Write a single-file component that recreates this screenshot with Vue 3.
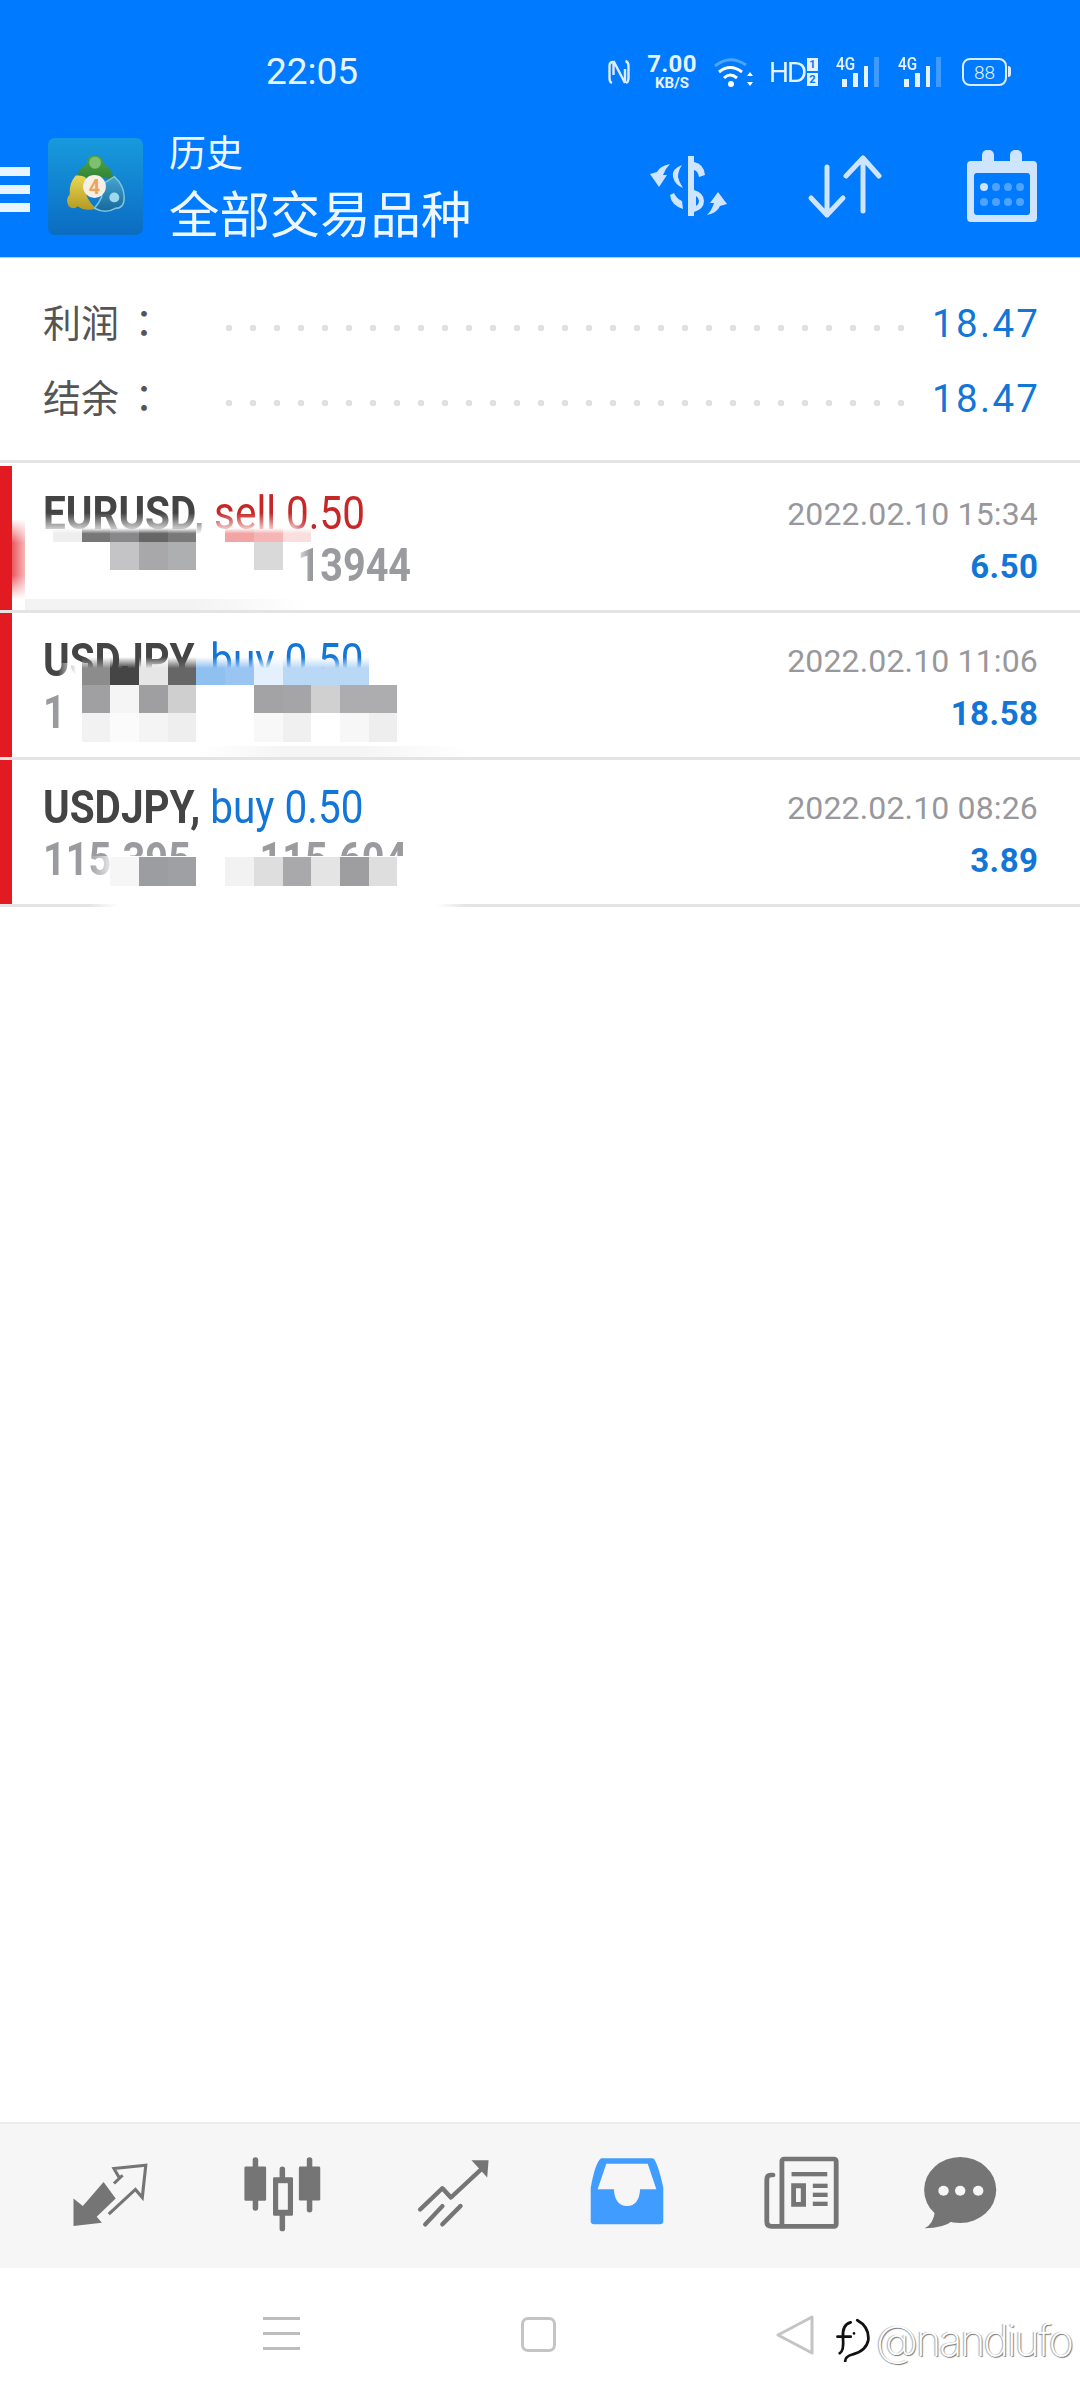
<script setup>
// one row per trade, mosaics are the blurred-out parts of the screenshot
const trades = [
  {
    symbol: 'EURUSD,', side: 'sell', lots: '0.50', price: '', priceEnd: '13944',
    time: '2022.02.10 15:34', profit: '6.50', kind: 'first',
    mosaic: {
      rows: '14px 28px', fade: true,
      cells: [
        ['#eeeeee', '#777778', '#88888a', '#666667', '#79797a', null, '#f2a3a3', '#f5b5b5', '#fbdede', null, null, null],
        [null, null, '#c4c4c6', '#a8a8ab', '#aeafb1', null, null, '#d9d9da', null, null, null, null],
      ],
    },
  },
  {
    symbol: 'USDJPY,', side: 'buy', lots: '0.50', price: '1', priceEnd: '',
    time: '2022.02.10 11:06', profit: '18.58', kind: 'second',
    mosaic: {
      rows: '28px 28px 29px', fade: true,
      cells: [
        [null, '#8c8c8c', '#454545', '#e6e6e6', '#666667', '#8fc0f0', '#9ac5f2', '#e4f0fb', '#b8d8f6', '#b8d8f6', '#b8d8f6', null],
        [null, '#a0a0a2', '#f5f5f5', '#9f9fa1', '#cfcfcf', '#ffffff', '#ffffff', '#a3a3a5', '#a5a5a7', '#d0d0d0', '#adadaf', '#adadaf'],
        [null, '#f2f2f2', '#fbfbfb', '#f4f4f4', '#eeeeee', '#ffffff', '#ffffff', '#f8f8f8', '#f0f0f0', '#ffffff', '#f7f7f7', '#eeeeee'],
      ],
    },
  },
  {
    symbol: 'USDJPY,', side: 'buy', lots: '0.50', price: '115.395', priceEnd: '115.604',
    time: '2022.02.10 08:26', profit: '3.89', kind: 'third',
    mosaic: {
      rows: '29px', fade: false,
      cells: [
        [null, null, '#f6f6f6', '#9c9da0', '#9fa0a3', null, '#f2f2f2', '#dedede', '#a9a9ab', '#e4e4e4', '#9e9ea0', '#dedede'],
      ],
    },
  },
]
</script>

<template>
  <div class="page">
    <header class="header">
      <div class="status">
        <span class="clock">22:05</span>
        <div class="status-icons">
          <svg class="ic-nfc" viewBox="0 0 22 28" width="22" height="28" fill="none" stroke="#dcecff" stroke-width="2.4">
            <path d="M5 4 Q1.5 4 1.5 8 V20 Q1.5 24 4 25" />
            <path d="M5.500 3 V17 M5.500 3 L17 25 M17 11 V25" />
            <path d="M17.500 3 Q20.500 4 20.500 8 V20 Q20.500 24 18 25" />
          </svg>
          <div class="speed"><b>7.00</b><i>KB/S</i></div>
          <svg class="ic-wifi" viewBox="0 0 40 30" width="40" height="30" fill="none" stroke="#fff" stroke-width="3">
            <path d="M1 9 Q16 -3 32 8" stroke="#4ea3ff" />
            <path d="M5 15 Q16 6 28 15" />
            <path d="M10 21 Q16 15 23 21" />
            <circle cx="17" cy="27" r="3" fill="#fff" stroke="none" />
            <path d="M36 15 l-3 4 h6 z M36 29 l-3 -4 h6 z" fill="#fff" stroke="none" />
          </svg>
          <span class="hd">HD</span>
          <div class="sims"><span>1</span><span>2</span></div>
          <div class="signal">
            <span class="g4">4G</span>
            <i style="height:8px"></i><i style="height:14px"></i><i style="height:21px"></i><i class="off" style="height:30px"></i>
          </div>
          <div class="signal">
            <span class="g4">4G</span>
            <i style="height:8px"></i><i style="height:14px"></i><i style="height:21px"></i><i class="off" style="height:30px"></i>
          </div>
          <div class="battery"><span>88</span></div>
        </div>
      </div>

      <div class="toolbar">
        <div class="burger"><i></i><i></i><i></i></div>
        <svg class="logo" viewBox="8 8 96 98" width="97" height="97">
          <defs>
            <linearGradient id="logo-bg" x1="0" y1="0" x2="0" y2="1">
              <stop offset="0" stop-color="#189ade" />
              <stop offset="1" stop-color="#0b6cc2" />
            </linearGradient>
            <linearGradient id="logo-g" x1="0" y1="0" x2="0" y2="1">
              <stop offset="0" stop-color="#4fa63d" />
              <stop offset="1" stop-color="#2f7f3a" />
            </linearGradient>
            <linearGradient id="logo-y" x1="0" y1="0" x2="0" y2="1">
              <stop offset="0" stop-color="#ead755" />
              <stop offset="1" stop-color="#b49a22" />
            </linearGradient>
            <linearGradient id="logo-b" x1="0" y1="0" x2="0" y2="1">
              <stop offset="0" stop-color="#45a6d2" />
              <stop offset="1" stop-color="#17689c" />
            </linearGradient>
          </defs>
          <rect x="8" y="8" width="96" height="98" rx="7" fill="url(#logo-bg)" />
          <path d="M55 26 Q63 26 64 34 Q73 38 75 52 Q64 46 55 48 Q46 46 36 52 Q38 38 47 34 Q47 26 55 26Z" fill="url(#logo-g)" />
          <circle cx="55.500" cy="33" r="6" fill="#7fbf70" />
          <path d="M36 46 Q47 45 48 52 L47 66 Q50 74 57 79 Q46 83 38 77 Q34 81 29 77 Q25 70 30 65 Q29 54 36 46Z" fill="url(#logo-y)" />
          <path d="M75 47 Q85 56 85 68 Q85 79 76 79 Q66 85 55 79 Q60 73 62 68 L64 54Z" fill="url(#logo-b)" stroke="#7cc4e0" stroke-width="1.500" />
          <circle cx="75" cy="68" r="5" fill="#9fd8ea" />
          <circle cx="55" cy="57" r="11.500" fill="#f6efe6" />
          <text x="55" y="64.500" text-anchor="middle" class="logo-four">4</text>
        </svg>
        <div class="titles">
          <div class="t-small">历史</div>
          <div class="t-big">全部交易品种</div>
        </div>
        <div class="tools">
          <svg viewBox="10 13 80 64" width="80" height="64" fill="#cfe5ff">
            <path d="M50 15 H56 V75 H50Z" />
            <path d="M56 21 Q66 23 67 34 L61 36 Q60 30 56 29Z" />
            <path fill-rule="evenodd" d="M56 49 Q66 52 66 60 Q66 68 56 71Z M58 55 V65 Q61 63 61 60 Q61 57 58 55Z" />
            <path d="M44 24 Q33 28 35 36 Q37 44 45 47 Q41 41 40 36 Q40 30 44 24Z" />
            <path d="M32 54 Q33 64 45 68 L44 60 Q38 57 36 52Z" />
            <path d="M32 23 Q22 25 19 31 L12 33 L21 46 L29 34 L25 34 Q27 28 32 23Z" />
            <path d="M69 74 Q79 72 82 65 L89 63 L80 51 L72 62 L76 62 Q74 69 69 74Z" />
          </svg>
          <svg class="tool-sort" viewBox="0 0 76 64" width="76" height="64" fill="none" stroke="#cfe5ff" stroke-width="5" stroke-linecap="round" stroke-linejoin="round">
            <path d="M20 12 V60 M4 43 L20 60 L36 43" />
            <path d="M56 3 V56 M39 21 L56 3 L72 21" />
          </svg>
          <svg class="tool-cal" viewBox="0 0 70 72" width="70" height="72">
            <rect x="0" y="11" width="70" height="61" rx="4" fill="#cfe5ff" />
            <rect x="15" y="0" width="12" height="16" rx="5" fill="#cfe5ff" />
            <rect x="43" y="0" width="12" height="16" rx="5" fill="#cfe5ff" />
            <rect x="7" y="23" width="56" height="42" rx="3" fill="#007aff" />
            <g fill="#4ea3ff">
              <circle cx="17" cy="37" r="4" fill="#cfe5ff" /><circle cx="29" cy="37" r="4" /><circle cx="41" cy="37" r="4" /><circle cx="53" cy="37" r="4" />
              <circle cx="17" cy="52" r="4" /><circle cx="29" cy="52" r="4" /><circle cx="41" cy="52" r="4" /><circle cx="53" cy="52" r="4" />
            </g>
          </svg>
        </div>
      </div>
    </header>

    <section class="summary">
      <div class="sum-row">
        <span class="sum-label">利润<span class="colon">：</span></span>
        <span class="dots"></span>
        <span class="sum-value">18.47</span>
      </div>
      <div class="sum-row">
        <span class="sum-label">结余<span class="colon">：</span></span>
        <span class="dots"></span>
        <span class="sum-value">18.47</span>
      </div>
    </section>

    <main class="list">
      <div v-for="t in trades" :key="t.time" class="row" :class="t.kind">
        <div class="flag"></div>
        <div class="row-body">
          <div class="row-left">
            <div class="title"><b>{{ t.symbol }}</b> <span :class="t.side">{{ t.side }} {{ t.lots }}</span></div>
            <div class="price"><span>{{ t.price }}</span><span class="price-end">{{ t.priceEnd }}</span></div>
          </div>
          <div class="row-right">
            <div class="time">{{ t.time }}</div>
            <div class="profit">{{ t.profit }}</div>
          </div>
        </div>
        <div class="wash"></div>
        <div class="smear"></div>
        <div class="shade"></div>
        <div class="mosaic" :style="{ gridTemplateRows: t.mosaic.rows }">
          <template v-for="(line, i) in t.mosaic.cells" :key="i">
            <i
              v-for="(c, j) in line"
              :key="j"
              :class="{ fade: t.mosaic.fade && i === 0 }"
              :style="{ background: c || 'transparent' }"
            ></i>
          </template>
        </div>
      </div>
    </main>

    <nav class="tabs">
      <svg viewBox="200 170 240 220" width="83" height="73" preserveAspectRatio="none">
        <path d="M213 295 V378 L295 368 L280 350 L335 295 L300 245 L240 318Z" fill="#757575" />
        <path d="M345 232 L330 205 L422 195 L412 292 L392 268 L315 342 M330 250 L355 225" fill="none" stroke="#757575" stroke-width="9" />
      </svg>
      <svg viewBox="700 165 235 235" width="81" height="78" preserveAspectRatio="none">
        <g stroke="#757575" stroke-width="16" stroke-linecap="round">
          <path d="M739 180 V325 M817 208 V387 M896 180 V330" />
        </g>
        <rect x="707" y="200" width="63" height="103" rx="4" fill="#757575" />
        <rect x="865" y="200" width="62" height="102" rx="4" fill="#757575" />
        <rect x="790" y="232" width="58" height="116" rx="4" fill="#757575" />
        <rect x="805" y="250" width="28" height="80" fill="#f6f6f6" />
      </svg>
      <svg viewBox="1205 170 225 220" width="77" height="73" preserveAspectRatio="none">
        <g fill="none" stroke="#757575" stroke-width="13" stroke-linecap="round" stroke-linejoin="round">
          <path d="M1220 328 L1285 264 L1310 292 L1408 198" />
          <path d="M1235 373 L1285 318 M1285 373 L1338 318" />
        </g>
        <path d="M1370 180 H1420 L1416 232 Z" fill="#757575" />
      </svg>
      <svg viewBox="140 175 220 210" width="76" height="70" preserveAspectRatio="none">
        <path d="M175 182 H325 Q338 190 355 270 V370 Q355 380 345 380 H155 Q145 380 145 370 V270 Q158 195 175 182Z" fill="#409cff" />
        <path d="M190 198 H310 L335 275 H288 Q285 325 250 325 Q215 325 212 275 H165Z" fill="#f6f6f6" />
      </svg>
      <svg viewBox="640 165 230 228" width="79" height="76" preserveAspectRatio="none">
        <g fill="none" stroke="#757575" stroke-width="14" stroke-linejoin="round" stroke-linecap="round">
          <rect x="698" y="177" width="158" height="202" rx="6" />
          <path d="M672 225 H665 Q654 225 654 240 V365 Q654 379 668 379 H698" />
        </g>
        <g fill="#757575">
          <rect x="726" y="216" width="104" height="13" />
          <path fill-rule="evenodd" d="M725 250 H768 V320 H725Z M739 265 V306 H753 V265Z" />
          <rect x="788" y="251" width="43" height="13" />
          <rect x="788" y="278" width="43" height="13" />
          <rect x="788" y="305" width="43" height="13" />
        </g>
      </svg>
      <svg viewBox="1100 165 225 225" width="78" height="75" preserveAspectRatio="none">
        <ellipse cx="1213" cy="270" rx="104" ry="99" fill="#757575" />
        <path d="M1140 335 Q1136 372 1110 385 Q1165 385 1195 360Z" fill="#757575" />
        <circle cx="1165" cy="272" r="15" fill="#f6f6f6" />
        <circle cx="1213" cy="272" r="15" fill="#f6f6f6" />
        <circle cx="1265" cy="272" r="15" fill="#f6f6f6" />
      </svg>
    </nav>

    <footer class="nav">
      <div class="nav-menu"><i></i><i></i><i></i></div>
      <div class="nav-home"></div>
      <svg class="nav-back" viewBox="0 0 38 42" width="38" height="42" fill="none" stroke="#c4c4c4" stroke-width="3" stroke-linejoin="round">
        <path d="M36 2 V38 L2 20Z" />
      </svg>
      <div class="mark">
        <svg viewBox="0 0 34 40" width="38" height="44" fill="none" stroke="#111" stroke-width="2.500" stroke-linecap="round">
          <path d="M2 17 H14 M14 4 Q6 6 7 18 Q8 30 4 32" />
          <path d="M20 2 Q31 8 30 20 Q28 30 16 33 Q9 35 9 39" />
          <circle cx="17" cy="14" r="1.200" fill="#111" stroke="none" />
        </svg>
        <span>@nandiufo</span>
      </div>
    </footer>
  </div>
</template>

<style>
html, body { margin: 0; background: #fff; }
</style>

<style scoped>
.page {
  position: relative;
  width: 1080px;
  height: 2400px;
  display: flex;
  flex-direction: column;
  background: #fff;
  font-family: Roboto, "Noto Sans CJK SC", sans-serif;
  overflow: hidden;
}

/* header */
.header {
  height: 258px;
  background: #007aff;
  border-bottom: 1px solid #9fd4ff;
  box-sizing: border-box;
  color: #e6f2ff;
}
.status {
  height: 138px;
  box-sizing: border-box;
  display: flex;
  align-items: flex-start;
  padding: 56px 73px 0 266px;
}
.clock {
  font-size: 37px;
  line-height: 32px;
  color: #e6f4ff;
}
.status-icons {
  margin-left: auto;
  display: flex;
  align-items: center;
  height: 32px;
  color: #e6f2ff;
}
.speed {
  width: 50px;
  margin-left: 17px;
  display: flex;
  flex-direction: column;
  align-items: center;
  gap: 5px;
}
.speed b { font-size: 24px; font-weight: 700; line-height: 17px; letter-spacing: .3px; }
.speed i { font-size: 15px; font-style: normal; font-weight: 700; line-height: 11px; }
.ic-wifi { margin-left: 17px; }
.hd {
  margin-left: 15px;
  font-size: 30px;
  font-family: "Liberation Sans", sans-serif;
  letter-spacing: -2px;
  width: 37px;
  transform: scaleX(.92);
  transform-origin: left;
}
.sims {
  margin-left: 1px;
  width: 11px;
  display: flex;
  flex-direction: column;
  gap: 2px;
}
.sims span {
  background: #e6f2ff;
  color: #007aff;
  font-size: 11px;
  font-weight: 700;
  line-height: 13px;
  text-align: center;
}
.signal {
  position: relative;
  display: flex;
  align-items: flex-end;
  height: 30px;
  width: 43px;
  gap: 6px;
  margin-left: 18px;
  padding-left: 6px;
  box-sizing: border-box;
}
.signal + .signal { margin-left: 19px; }
.signal i { width: 5px; background: #e6f2ff; }
.signal i.off { background: #3f9bff; }
.g4 {
  position: absolute;
  left: 0;
  top: -1px;
  font-size: 18px;
  line-height: 16px;
  font-weight: 500;
  transform: scaleX(.85);
  transform-origin: left;
}
.battery {
  position: relative;
  margin-left: 21px;
  width: 45px;
  height: 28px;
  box-sizing: border-box;
  border: 2.5px solid #dcecff;
  border-radius: 8px;
  display: flex;
  align-items: center;
  justify-content: center;
  font-size: 19px;
  font-weight: 300;
}
.battery::after {
  content: "";
  position: absolute;
  right: -6px;
  top: 6px;
  width: 3px;
  height: 11px;
  background: #dcecff;
  border-radius: 0 3px 3px 0;
}

.toolbar {
  display: flex;
  align-items: flex-start;
  height: 119px;
}
.burger {
  width: 30px;
  margin-top: 29px;
  display: flex;
  flex-direction: column;
  gap: 9px;
}
.burger i { height: 9px; background: #e8f5ff; }
.logo { margin-left: 17px; }
.logo-four { font: 700 20px Roboto, sans-serif; fill: #eda45a; }
.titles { margin-left: 25px; color: #eef7ff; }
.t-small { font-size: 37px; line-height: 37px; margin-top: -2px; }
.t-big { font-size: 50.4px; line-height: 52px; margin-top: 17px; }
.tools { margin-left: auto; display: flex; align-items: flex-start; padding-right: 43px; }
.tools > svg { margin-top: 16px; }
.tools > .tool-sort { margin-left: 79px; margin-top: 17px; }
.tools > .tool-cal { margin-left: 84px; margin-top: 12px; }

/* summary */
.summary {
  height: 205px;
  box-sizing: border-box;
  padding-top: 26px;
  border-bottom: 3px solid #e4e4e4;
}
.sum-row {
  display: flex;
  align-items: center;
  height: 75px;
  padding: 0 42px 0 43px;
}
.sum-label {
  font-size: 38px;
  line-height: 72px;
  height: 73px;
  color: #555;
  width: 174px;
}
.colon { font-family: "Noto Sans CJK TC", sans-serif; margin-left: 6px; }
.dots {
  flex: 1;
  height: 100%;
  background-image: radial-gradient(circle, #e0e0e0 3px, transparent 3.6px);
  background-size: 24px 24px;
  background-repeat: repeat-x;
  background-position: 0 32px;
  margin-right: 18px;
}
.sum-value {
  font-size: 38.5px;
  line-height: 79px;
  height: 75px;
  color: #1275d8;
  letter-spacing: 2.3px;
  margin-right: -2.3px;
}

/* trades */
.list { flex: 1; }
.row {
  position: relative;
  display: flex;
  height: 147px;
  box-sizing: border-box;
  border-bottom: 3px solid #e4e4e4;
}
.row.first { height: 150px; padding-top: 3px; }
.flag { width: 12px; background: #e21b22; }
.row-body {
  flex: 1;
  display: flex;
  justify-content: space-between;
  padding: 21px 42px 0 31px;
}
.title, .price {
  line-height: 52px;
  white-space: nowrap;
  transform-origin: left;
}
.title { font-size: 46px; transform: scaleX(.88); }
.title b { color: #444; font-weight: 700; }
.sell { color: #c62828; }
.buy { color: #1275d8; }
.price { font-size: 46px; font-weight: 700; color: #9a9b9f; height: 52px; transform: scaleX(.86); }
.first .price-end { margin-left: 296px; }
.third .price-end { margin-left: 80px; }
.row-right { text-align: right; padding-top: 1px; }
.time { font-size: 32px; line-height: 52px; color: #98989c; letter-spacing: .15px; }
.profit { font-size: 33px; line-height: 54px; font-weight: 700; color: #1275d8; letter-spacing: .5px; margin-right: -.5px; }

/* redacted patches drawn over the row */
.mosaic {
  position: absolute;
  left: 53px;
  display: grid;
  grid-template-columns: repeat(12, 28.7px);
}
.mosaic i { display: block; }
.mosaic i.fade { -webkit-mask-image: linear-gradient(to bottom, transparent, #000 40%); mask-image: linear-gradient(to bottom, transparent, #000 40%); }
.first .mosaic { top: 65px; }
.second .mosaic { top: 44px; }
.third .mosaic { top: 97px; }

.wash, .smear, .shade { position: absolute; display: none; }
.first .wash {
  display: block;
  left: 25px;
  top: 50px;
  width: 285px;
  height: 86px;
  background: linear-gradient(to right, #fff 94%, rgba(255, 255, 255, 0));
  -webkit-mask-image: linear-gradient(to bottom, transparent, #000 25%);
  mask-image: linear-gradient(to bottom, transparent, #000 25%);
}
.second .wash {
  display: block;
  left: 58px;
  top: 50px;
  width: 30px;
  height: 90px;
  background: linear-gradient(to right, rgba(255, 255, 255, 0), #fff 60%);
}
.first .smear {
  display: block;
  left: 12px;
  top: 56px;
  width: 13px;
  height: 80px;
  background: linear-gradient(to right, #e8585d, #f6b6b8);
  -webkit-mask-image: linear-gradient(to bottom, transparent, #000 30%, #000 70%, transparent);
  mask-image: linear-gradient(to bottom, transparent, #000 30%, #000 70%, transparent);
}
.first .shade {
  display: block;
  left: 25px;
  top: 136px;
  width: 280px;
  height: 11px;
  background: linear-gradient(to right, #f3f3f3 60%, transparent);
}
.second .shade {
  display: block;
  left: 200px;
  top: 133px;
  width: 270px;
  height: 11px;
  background: linear-gradient(to right, transparent, #f5f5f5 30%, #f5f5f5 60%, transparent);
}
.third .wash {
  display: block;
  left: 88px;
  top: 96px;
  width: 378px;
  height: 52px;
  background: #fff;
  -webkit-mask-image: linear-gradient(to right, transparent, #000 8%, #000 92%, transparent);
  mask-image: linear-gradient(to right, transparent, #000 8%, #000 92%, transparent);
}

/* bottom tabs */
.tabs {
  height: 146px;
  box-sizing: border-box;
  background: #f6f6f6;
  border-top: 2px solid #ebebeb;
  display: flex;
  align-items: flex-start;
  padding: 33px 0 0 69px;
}
.tabs svg:nth-child(2) { margin-left: 90px; margin-top: -2px; }
.tabs svg:nth-child(3) { margin-left: 92px; }
.tabs svg:nth-child(4) { margin-left: 97px; margin-top: -1px; }
.tabs svg:nth-child(5) { margin-left: 97px; margin-top: -2px; }
.tabs svg:nth-child(6) { margin-left: 80px; margin-top: -2px; }

.nav {
  position: relative;
  height: 132px;
  box-sizing: border-box;
  display: flex;
  align-items: flex-start;
  padding: 49px 0 0 263px;
}
.nav-menu {
  width: 37px;
  display: flex;
  flex-direction: column;
  gap: 12px;
}
.nav-menu i { height: 3px; background: #bdbdbd; }
.nav-home {
  width: 35px;
  height: 35px;
  box-sizing: border-box;
  margin-left: 221px;
  border: 3px solid #c4c4c4;
  border-radius: 7px;
}
.nav-back { margin-left: 220px; margin-top: -2px; }
.mark {
  position: absolute;
  left: 835px;
  top: 46px;
  display: flex;
  align-items: center;
  gap: 3px;
}
.mark span {
  font-size: 43px;
  font-weight: 200;
  font-family: Inter, Roboto, sans-serif;
  color: #fff;
  letter-spacing: -2px;
  text-shadow: 1px 1px 1px #777, -1px 0 1px #aaa;
}
</style>
